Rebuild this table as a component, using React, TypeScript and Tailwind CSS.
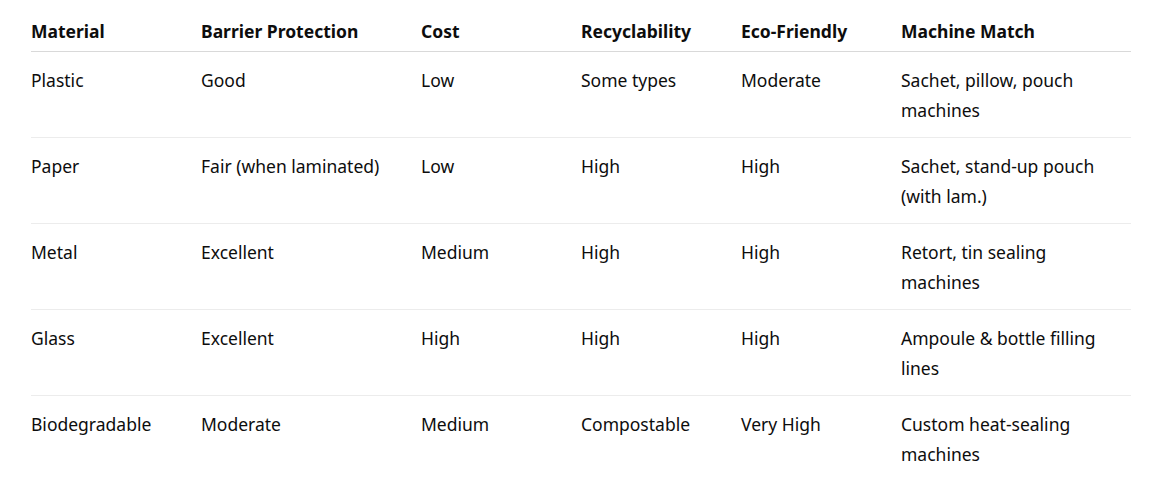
export default function App() {
  const headers = [
    "Material",
    "Barrier Protection",
    "Cost",
    "Recyclability",
    "Eco-Friendly",
    "Machine Match",
  ];

  const rows = [
    ["Plastic", "Good", "Low", "Some types", "Moderate", "Sachet, pillow, pouch machines"],
    ["Paper", "Fair (when laminated)", "Low", "High", "High", "Sachet, stand-up pouch (with lam.)"],
    ["Metal", "Excellent", "Medium", "High", "High", "Retort, tin sealing machines"],
    ["Glass", "Excellent", "High", "High", "High", "Ampoule & bottle filling lines"],
    ["Biodegradable", "Moderate", "Medium", "Compostable", "Very High", "Custom heat-sealing machines"],
  ];

  const widths = ["w-[170px]", "w-[220px]", "w-[160px]", "w-[160px]", "w-[160px]", "w-[230px]"];

  return (
    <div className="bg-white min-h-screen pt-4 pl-[31px] font-['Segoe_UI','Noto_Sans',sans-serif] text-[17.5px] leading-[30px] text-[#0d0d0d]">
      <table className="table-fixed w-[1100px] border-collapse">
        <colgroup>
          {widths.map((w, i) => (
            <col key={i} className={w} />
          ))}
        </colgroup>
        <thead>
          <tr className="border-b border-[#d9d9d9]">
            {headers.map((h) => (
              <th key={h} className="text-left font-bold pb-[5px] pr-4 align-top">
                {h}
              </th>
            ))}
          </tr>
        </thead>
        <tbody>
          {rows.map((r, i) => (
            <tr key={i} className={i < rows.length - 1 ? "border-b border-[#ececec]" : ""}>
              {r.map((c, j) => (
                <td key={j} className="pt-[13px] pb-[12px] pr-4 align-top">
                  {c}
                </td>
              ))}
            </tr>
          ))}
        </tbody>
      </table>
    </div>
  );
}
